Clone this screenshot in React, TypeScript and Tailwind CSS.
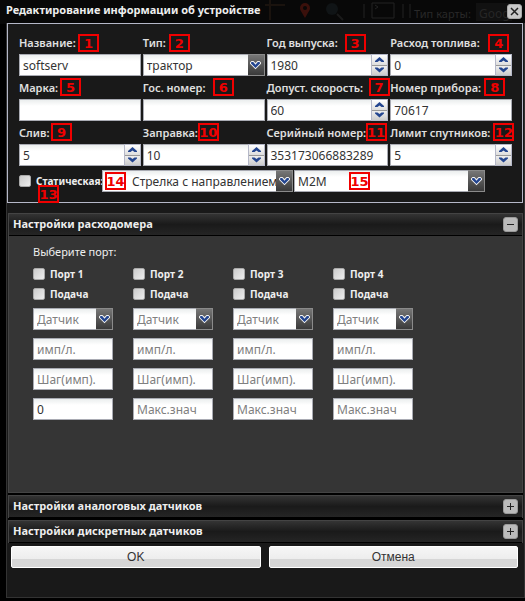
import React, { useId, useState } from 'react';

const boxClass =
  'h-[22px] border border-[#a9abb3] bg-linear-to-b from-[#ebeeee] from-0% to-white to-30% px-[3px] text-xs text-[#333] outline-none';

function Chevron() {
  return (
    <span className="pointer-events-none absolute inset-y-0 right-0 flex w-[17px] items-center justify-center border border-l-0 border-[#8a8a8a] bg-linear-to-b from-[#777] to-[#3a3a3a]">
      <svg width="11" height="9" viewBox="0 0 11 9">
        <path d="M0 1.5 1.5 0h2l2 2 2-2h2L11 1.5v1.3L5.5 8.3 0 2.8z" fill="#f4f4f4" />
        <path d="M1 1.6 1.8 1h1.4l2.3 2.8L7.8 1h1.4l.8.6v.9L5.5 7 1 2.5z" fill="#23458f" />
      </svg>
    </span>
  );
}

function Marker({ n, place }: { n: number; place: string }) {
  return (
    <span
      className={`pointer-events-none absolute z-10 flex h-[18px] w-[21px] items-center justify-center border-2 border-[#f00000] font-['DejaVu_Sans',sans-serif] text-[13px] leading-none font-bold text-[#f00000] ${place}`}
    >
      {n}
    </span>
  );
}

function Spinner() {
  return (
    <span className="absolute inset-y-0 right-0 flex w-[17px] flex-col border border-[#b5b8c8] bg-[#ddd]">
      <button type="button" aria-label="Больше" className="flex flex-1 items-center justify-center border-b border-[#999] bg-linear-to-b from-white to-[#ddd]">
        <svg width="9" height="6" viewBox="0 0 9 6"><path d="M4.5 0 9 4v1H6.5l-2-1.5-2 1.5H0V4z" fill="#23458f" /></svg>
      </button>
      <button type="button" aria-label="Меньше" className="flex flex-1 items-center justify-center bg-linear-to-b from-[#eee] to-[#ccc]">
        <svg width="9" height="6" viewBox="0 0 9 6"><path d="M4.5 5.5 9 1.5v-1H6.5L4.500 2l-2-1.500H0v1z" fill="#23458f" /></svg>
      </button>
    </span>
  );
}

type FieldProps = { label: string; n: number; place: string; value?: string; kind?: 'text' | 'select' | 'spin' };

function Field({ label, n, place, value = '', kind = 'text' }: FieldProps) {
  const id = useId();
  return (
    <div className="relative min-w-0">
      <label htmlFor={id} className="block h-[23px] text-[11px] leading-6 font-semibold whitespace-nowrap text-[#e0e0e0]">
        {label}
      </label>
      <Marker n={n} place={place} />
      <div className="relative">
        {kind === 'select' ? (
          <select id={id} className={`${boxClass} block w-full appearance-none pt-px`}>
            <option>{value}</option>
          </select>
        ) : (
          <input id={id} defaultValue={value} className={`${boxClass} block w-full`} />
        )}
        {kind === 'select' && <Chevron />}
        {kind === 'spin' && <Spinner />}
      </div>
    </div>
  );
}

function Check({ label }: { label: string }) {
  return (
    <label className="flex h-5 items-center gap-[5px] text-[10px] font-bold whitespace-nowrap text-[#eee]">
      <input type="checkbox" className="size-3 shrink-0 appearance-none rounded-xs border border-[#aaa] bg-linear-to-br from-[#ccc] to-[#eee] checked:bg-[#23458f]" />
      {label}
    </label>
  );
}

function Port({ n }: { n: number }) {
  return (
    <div className="w-20">
      <Check label={`Порт ${n}`} />
      <Check label="Подача" />
      <div className="mt-1 flex flex-col gap-2">
        <div className="relative">
          <select aria-label={`Датчик ${n}`} className={`${boxClass} block w-full appearance-none pt-px text-[#808080]`}>
            <option>Датчик</option>
          </select>
          <Chevron />
        </div>
        <input aria-label="имп/л." placeholder="имп/л." className={`${boxClass} w-full placeholder:text-[#808080]`} />
        <input aria-label="Шаг(имп)." placeholder="Шаг(имп)." className={`${boxClass} w-full placeholder:text-[#808080]`} />
        <input aria-label="Макс.знач" placeholder="Макс.знач" defaultValue={n === 1 ? '0' : ''} className={`${boxClass} w-full placeholder:text-[#808080]`} />
      </div>
    </div>
  );
}

function Panel({ title, initial = false, children }: { title: string; initial?: boolean; children?: React.ReactNode }) {
  const [open, setOpen] = useState(initial);
  return (
    <section className="border-x border-t border-[#444] bg-[#353535]">
      <h2 className="flex h-[22px] items-center justify-between border-b border-black bg-linear-to-b from-[#343434] from-0% via-[#1a1a1a] via-50% to-[#252525] px-1 text-[11px] font-bold text-[#eee]">
        {title}
        <button
          type="button"
          aria-expanded={open}
          aria-label={title}
          onClick={() => setOpen(!open)}
          className="flex size-[15px] items-center justify-center rounded-[3px] border border-[#999] bg-[#bbb]"
        >
          <svg width="7" height="7" viewBox="0 0 7 7" shapeRendering="crispEdges">
            <path d={open ? 'M0 3h7v1H0z' : 'M0 3h7v1H0zM3 0h1v7H3z'} fill="#222" />
          </svg>
        </button>
      </h2>
      {open && children}
    </section>
  );
}

function Backdrop() {
  return (
    <div aria-hidden="true" className="pointer-events-none absolute inset-x-0 top-0 h-6 overflow-hidden bg-[#080808]">
      <svg className="absolute inset-0" width="525" height="24" fill="none">
        <path d="M265 5h20M270 0v20" stroke="#1a130e" strokeWidth="2" />
        <path d="M305 18c-4-7-5-8-5-10a5 5 0 0 1 10 0c0 2-1 3-5 10z" fill="#3a100b" />
        <circle cx="305" cy="8" r="2" fill="#080808" />
        <circle cx="332" cy="9" r="6" fill="#101416" />
        <path d="m337 14 6 6" stroke="#1a1a1a" strokeWidth="2" />
        <path d="M364 4v14M403 4v14M410 4v14M372 3h22v15h-22zM375 5l3 2-3 2" stroke="#232323" />
        <path d="M476 3h36v18h-36z" fill="#111" />
      </svg>
      <span className="absolute top-1.5 left-[414px] text-[11px] leading-4 text-[#292929]">Тип карты:</span>
      <span className="absolute top-1.5 left-[479px] text-xs leading-4 text-[#262626]">Google</span>
    </div>
  );
}

const actionClass =
  "h-[22px] flex-1 rounded-xs border border-white bg-linear-to-b from-[#f6f6f6] from-0% via-[#ededed] via-60% to-[#d6d6d6] to-62% font-['Liberation_Sans',sans-serif] text-xs font-medium text-[#333]";

export default function App() {
  return (
    <main className="relative min-h-screen bg-black pb-[3px] pl-1.5 font-['Noto_Sans','Open_Sans',sans-serif]">
      <Backdrop />
      <div className="relative">
        <header className="flex h-[23px] items-center justify-between pr-[3px]">
          <h1 className="pb-0.5 text-[11px] font-bold text-[#eee]">Редактирование информации об устройстве</h1>
          <button type="button" aria-label="Закрыть" className="flex size-[15px] items-center justify-center rounded-[3px] border border-[#aaa] bg-[#c8c8c8]">
            <svg width="9" height="9" viewBox="0 0 9 9"><path d="m1 1 7 7M8 1 1 8" stroke="#222" strokeWidth="1.5" /></svg>
          </button>
        </header>
        <form onSubmit={(e) => e.preventDefault()} className="min-h-[575px] border border-t-0 border-[#333] bg-[#191919]">
          <div className="mr-px h-[180px] border border-[#b5b8c8] pt-[7px] pr-2.5 pl-[11px]">
            <div className="grid grid-cols-4 gap-x-0.5">
              <Field label="Название:" n={1} place="top-[3px] left-[59px]" value="softserv" />
              <Field label="Тип:" n={2} place="top-[3px] left-[26px]" value="трактор" kind="select" />
              <Field label="Год выпуска:" n={3} place="top-[3px] left-[78px]" value="1980" kind="spin" />
              <Field label="Расход топлива:" n={4} place="top-[3px] left-[98px]" value="0" kind="spin" />
              <Field label="Марка:" n={5} place="top-[2px] left-[41px]" />
              <Field label="Гос. номер:" n={6} place="top-[2px] left-[70px]" />
              <Field label="Допуст. скорость:" n={7} place="top-[2px] left-[102px]" value="60" kind="spin" />
              <Field label="Номер прибора:" n={8} place="top-[2px] left-[94px]" value="70617" />
              <Field label="Слив:" n={9} place="top-[2px] left-[32px]" value="5" kind="spin" />
              <Field label="Заправка:" n={10} place="top-[2px] left-[55px]" value="10" kind="spin" />
              <Field label="Серийный номер:" n={11} place="top-[2px] left-[99px]" value="353173066883289" />
              <Field label="Лимит спутников:" n={12} place="top-[2px] left-[103px]" value="5" kind="spin" />
            </div>
            <div className="relative mt-1 mr-[27px] flex items-center">
              <div className="w-[83px] shrink-0"><Check label="Статическая:" /></div>
              <div className="relative flex-1">
                <select aria-label="Значок" className={`${boxClass} block w-full appearance-none pt-px pl-[29px]`}><option>Стрелка с направлением</option></select>
                <Chevron />
              </div>
              <div className="relative ml-px flex-1">
                <select aria-label="Оператор" className={`${boxClass} block w-full appearance-none pt-px`}><option>M2M</option></select>
                <Chevron />
              </div>
              <Marker n={13} place="top-[15px] left-[19px]" />
              <Marker n={14} place="top-[2px] left-[86px]" />
              <Marker n={15} place="top-[2px] left-[330px]" />
            </div>
          </div>
          <div className="mt-2.5 mr-px ml-px flex flex-col gap-0.5 bg-black">
            <Panel title="Настройки расходомера" initial>
              <div className="h-[257px] border-b border-[#444] pt-1.5 pl-6">
                <p className="mb-0.5 text-[11px] leading-5 text-[#eee]">Выберите порт:</p>
                <div className="flex gap-5">
                  <Port n={1} />
                  <Port n={2} />
                  <Port n={3} />
                  <Port n={4} />
                </div>
              </div>
            </Panel>
            <Panel title="Настройки аналоговых датчиков" />
            <Panel title="Настройки дискретных датчиков" />
          </div>
          <div className="mt-[3px] flex gap-2 pr-1.5 pl-1">
            <button type="submit" className={actionClass}>OK</button>
            <button type="button" className={actionClass}>Отмена</button>
          </div>
        </form>
      </div>
    </main>
  );
}
